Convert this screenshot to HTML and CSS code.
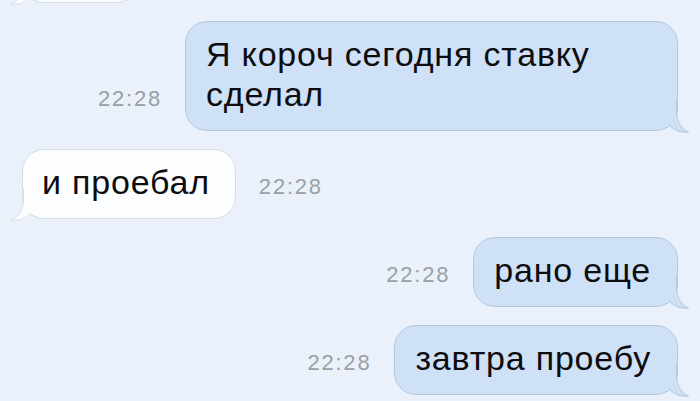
FILE: index.html
```html
<!DOCTYPE html>
<html lang="ru">
<head>
    <meta charset="UTF-8">
    <meta name="viewport" content="width=device-width, initial-scale=1.0">
    <title>Сообщения</title>
    <link rel="stylesheet" href="styles.css">
</head>
<body>
    <div class="chat">
        <div class="msg in msg-cut">
            <div class="bubble bubble-cut">&nbsp;
                <svg class="tail" width="38" height="34" viewBox="0 0 38 34"><path class="tail-fill" d="M12 0 L23.5 0 L23.5 10 C23.5 20 27 28 35.5 32 C28 33 21 30 16 25 Z"/><path class="tail-line" d="M23.5 0 L23.5 10 C23.5 20 27 28 35.5 32 C28 33 21 30 16 25"/></svg>
            </div>
        </div>

        <div class="msg out">
            <span class="time">22:28</span>
            <div class="bubble">Я короч сегодня ставку сделал
                <svg class="tail" width="38" height="34" viewBox="0 0 38 34"><path class="tail-fill" d="M12 0 L23.5 0 L23.5 10 C23.5 20 27 28 35.5 32 C28 33 21 30 16 25 Z"/><path class="tail-line" d="M23.5 0 L23.5 10 C23.5 20 27 28 35.5 32 C28 33 21 30 16 25"/></svg>
            </div>
        </div>

        <div class="msg in">
            <div class="bubble">и проебал
                <svg class="tail" width="38" height="34" viewBox="0 0 38 34"><path class="tail-fill" d="M12 0 L23.5 0 L23.5 10 C23.5 20 27 28 35.5 32 C28 33 21 30 16 25 Z"/><path class="tail-line" d="M23.5 0 L23.5 10 C23.5 20 27 28 35.5 32 C28 33 21 30 16 25"/></svg>
            </div>
            <span class="time">22:28</span>
        </div>

        <div class="msg out">
            <span class="time">22:28</span>
            <div class="bubble">рано еще
                <svg class="tail" width="38" height="34" viewBox="0 0 38 34"><path class="tail-fill" d="M12 0 L23.5 0 L23.5 10 C23.5 20 27 28 35.5 32 C28 33 21 30 16 25 Z"/><path class="tail-line" d="M23.5 0 L23.5 10 C23.5 20 27 28 35.5 32 C28 33 21 30 16 25"/></svg>
            </div>
        </div>

        <div class="msg out">
            <span class="time">22:28</span>
            <div class="bubble">завтра проебу
                <svg class="tail" width="38" height="34" viewBox="0 0 38 34"><path class="tail-fill" d="M12 0 L23.5 0 L23.5 10 C23.5 20 27 28 35.5 32 C28 33 21 30 16 25 Z"/><path class="tail-line" d="M23.5 0 L23.5 10 C23.5 20 27 28 35.5 32 C28 33 21 30 16 25"/></svg>
            </div>
        </div>
    </div>
</body>
</html>
```

FILE: styles.css
```css
body {
    margin: 0;
    padding: 0;
    background: #eaf1fa;
    font-family: "Liberation Sans", Arial, sans-serif;
    color: #0d0d0f;
    overflow: hidden;
    height: 401px;
}

.chat {
    display: flex;
    flex-direction: column;
    gap: 18px;
    padding: 0 22px;
}

.msg {
    display: flex;
    align-items: flex-end;
    gap: 23px;
}

.msg.out {
    justify-content: flex-end;
}

.msg-cut {
    margin-top: -67px;
}

.bubble {
    position: relative;
    box-sizing: border-box;
    max-width: 493px;
    padding: 12px 26px 16px 20px;
    font-size: 34px;
    line-height: 40px;
    letter-spacing: 0.8px;
    border-radius: 22px;
    background: #cfe1f7;
    border: 1px solid #b7c8de;
}

.in .bubble {
    padding: 12px 25px 16px 19px;
    background: #fcfdfe;
    border-color: #d6dde7;
}

.bubble-cut {
    width: 116px;
}

/* iOS-style tail in the bottom corner */
.tail {
    position: absolute;
    right: -14px;
    bottom: -4px;
    overflow: visible;
}

.tail-fill {
    fill: #cfe1f7;
}

.tail-line {
    fill: none;
    stroke: #b7c8de;
    stroke-width: 1;
}

.in .tail {
    right: auto;
    left: -14px;
    transform: scaleX(-1);
}

.in .tail-fill {
    fill: #fcfdfe;
}

.in .tail-line {
    stroke: #d6dde7;
}

.time {
    font-size: 22px;
    line-height: 24px;
    letter-spacing: 1.8px;
    color: #9a9fa7;
    margin-bottom: 20px;
    white-space: nowrap;
}
```
